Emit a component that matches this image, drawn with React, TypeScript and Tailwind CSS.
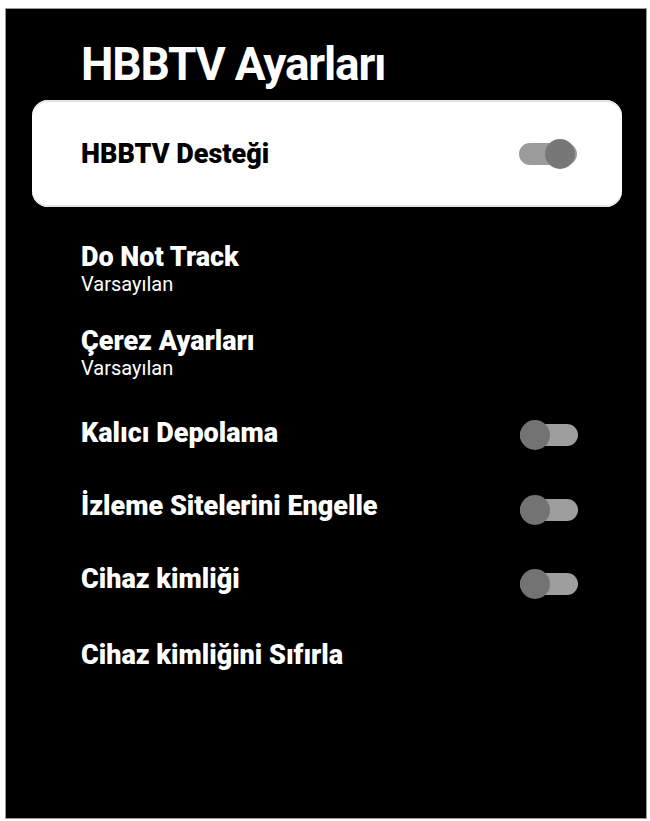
import React from 'react'

function Toggle({ on = false, dark = false }: { on?: boolean; dark?: boolean }) {
  return (
    <div className="relative w-[58px] h-[30px] shrink-0">
      <div
        className={`absolute left-0 right-0 top-[4px] h-[22px] rounded-full ${
          dark ? 'bg-[#9b9b9b]' : 'bg-[#9e9e9e]'
        }`}
      />
      <div
        className={`absolute top-0 w-[30px] h-[30px] rounded-full ${
          on ? 'right-[2px] bg-[#777777]' : 'left-0 bg-[#737373]'
        }`}
      />
    </div>
  )
}

export default function App() {
  return (
    <div className="w-[650px] h-[821px] bg-white pt-[8px] pl-[5px] font-['Roboto',sans-serif]">
      <div className="w-[642px] h-[811px] bg-black border border-[#9a9a9a] flex flex-col">
        <h1 className="pt-[32px] pl-[75px] text-[46px] leading-none font-bold text-white tracking-[-1.2px]">
          HBBTV Ayarları
        </h1>

        {/* focused item */}
        <div className="mt-[13px] ml-[26px] w-[590px] h-[107px] rounded-[16px] bg-white flex items-center justify-between pl-[49px] pr-[45px] shadow-[inset_0_2px_0_#e4e4e4,inset_0_-2px_0_#e4e4e4]">
          <span className="text-[27px] leading-[26px] font-black text-black">HBBTV Desteği</span>
          <Toggle on dark />
        </div>

        <div className="flex flex-col pl-[75px] pr-[68px] text-white">
          <div className="mt-[37px] text-[27px] leading-[26px] font-black">Do Not Track</div>
          <div className="mt-[5px] text-[20px] leading-[19px]">Varsayılan</div>

          <div className="mt-[34px] text-[27px] leading-[26px] font-black">Çerez Ayarları</div>
          <div className="mt-[5px] text-[20px] leading-[19px]">Varsayılan</div>

          <div className="mt-[40px] flex items-center justify-between h-[30px]">
            <span className="text-[27px] leading-[26px] font-black">Kalıcı Depolama</span>
            <div className="mt-[4px]">
              <Toggle />
            </div>
          </div>

          <div className="mt-[43px] flex items-center justify-between h-[30px]">
            <span className="text-[27px] leading-[26px] font-black">İzleme Sitelerini Engelle</span>
            <div className="mt-[8px]">
              <Toggle />
            </div>
          </div>

          <div className="mt-[43px] flex items-center justify-between h-[30px]">
            <span className="text-[27px] leading-[26px] font-black">Cihaz kimliği</span>
            <div className="mt-[10px]">
              <Toggle />
            </div>
          </div>

          <div className="mt-[48px] text-[27px] leading-[26px] font-black">Cihaz kimliğini Sıfırla</div>
        </div>
      </div>
    </div>
  )
}
